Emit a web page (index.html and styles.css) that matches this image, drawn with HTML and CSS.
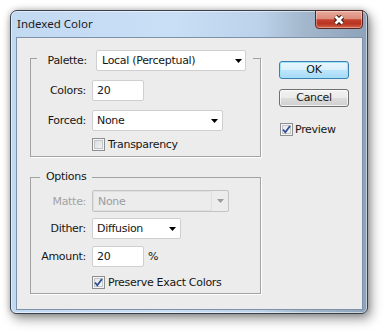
FILE: index.html
```html
<!DOCTYPE html>
<html lang="en">
<head>
  <meta charset="UTF-8" />
  <title>Indexed Color</title>
  <link rel="stylesheet" href="styles.css">
</head>
<body>

  <div class="window">
    <div class="titlebar">
      <div class="title">Indexed Color</div>
      <div class="close">
        <svg width="14" height="12" viewBox="0 0 14 12">
          <path d="M3.5 2.5 L10.5 9.5 M10.5 2.5 L3.5 9.5" stroke="#3a1812" stroke-width="4.6" fill="none"/>
          <path d="M3.5 2.5 L10.5 9.5 M10.5 2.5 L3.5 9.5" stroke="#fff" stroke-width="2.6" fill="none"/>
        </svg>
      </div>
    </div>

    <div class="client">
      <div class="main">

        <fieldset class="group palette">
          <legend>
            <span class="legend-label">Palette:</span>
            <div class="select palette-select">
              <span>Local (Perceptual)</span>
              <svg class="arrow" width="7" height="4" viewBox="0 0 7 4"><path d="M0 0h7L3.5 4z"/></svg>
            </div>
          </legend>

          <div class="row">
            <label>Colors:</label>
            <div class="input">20</div>
          </div>
          <div class="row gap-9">
            <label>Forced:</label>
            <div class="select forced-select">
              <span>None</span>
              <svg class="arrow" width="7" height="4" viewBox="0 0 7 4"><path d="M0 0h7L3.5 4z"/></svg>
            </div>
          </div>
          <div class="row check-row gap-7">
            <span class="check"></span>
            <span>Transparency</span>
          </div>
        </fieldset>

        <fieldset class="group options">
          <legend>Options</legend>

          <div class="row">
            <label class="dim">Matte:</label>
            <div class="select matte-select disabled">
              <span class="field">None</span>
              <svg class="arrow" width="7" height="4" viewBox="0 0 7 4"><path d="M0 0h7L3.5 4z"/></svg>
            </div>
          </div>
          <div class="row gap-6">
            <label>Dither:</label>
            <div class="select dither-select">
              <span>Diffusion</span>
              <svg class="arrow" width="7" height="4" viewBox="0 0 7 4"><path d="M0 0h7L3.5 4z"/></svg>
            </div>
          </div>
          <div class="row gap-7">
            <label>Amount:</label>
            <div class="input">20</div>
            <span class="unit">%</span>
          </div>
          <div class="row check-row gap-9">
            <span class="check checked">
              <svg width="11" height="11" viewBox="0 0 11 11"><path d="M2 5.5 L4.3 8.3 L9 2" stroke="#2f4f95" stroke-width="1.8" fill="none"/></svg>
            </span>
            <span>Preserve Exact Colors</span>
          </div>
        </fieldset>

      </div>

      <div class="side">
        <div class="btn default">OK</div>
        <div class="btn cancel">Cancel</div>
        <div class="preview">
          <span class="check checked">
            <svg width="11" height="11" viewBox="0 0 11 11"><path d="M2 5.5 L4.3 8.3 L9 2" stroke="#2f4f95" stroke-width="1.8" fill="none"/></svg>
          </span>
          <span>Preview</span>
        </div>
      </div>
    </div>
  </div>

</body>
</html>
```

FILE: styles.css
```css
* {
  box-sizing: border-box;
}

html,
body {
  min-height: 334px;
}

body {
  margin: 0;
  padding-top: 10px;
  background: #fff;
  font-family: "DejaVu Sans", sans-serif;
  font-size: 11px;
  letter-spacing: -0.3px;
  color: #161616;
}

/* window frame */
.window {
  margin-left: 10px;
  width: 358px;
  height: 304px;
  border: 1px solid #394049;
  border-radius: 7px 7px 6px 6px;
  padding: 0 4px 3px 5px;
  background: linear-gradient(to right, #c2d9f2 0%, #c9dff6 45%, #bcd2ea 70%, #a3b8cd 82%, #8ea3ba 100%);
  box-shadow: inset 0 0 0 1px rgba(255, 255, 255, 0.5), 0 0 6px rgba(0, 0, 0, 0.25), 3px 5px 12px rgba(0, 0, 0, 0.4);
  display: flex;
  flex-direction: column;
}

.titlebar {
  height: 26px;
  display: flex;
  justify-content: space-between;
  align-items: flex-start;
}

.title {
  font-family: "Noto Sans", sans-serif;
  font-size: 11.5px;
  letter-spacing: 0;
  line-height: 16px;
  padding: 5px 0 0 1px;
  color: #1b1b1b;
}

.close {
  width: 48px;
  height: 19px;
  margin-top: -1px;
  border: 1px solid #5a2720;
  border-radius: 0 0 4px 4px;
  background: linear-gradient(#e8ab9d 0%, #dc8c7c 45%, #c3402c 52%, #b93420 75%, #d2644c 100%);
  box-shadow: inset 0 0 0 1px rgba(255, 255, 255, 0.35);
  display: flex;
  align-items: center;
  justify-content: center;
}

.client {
  flex: 1;
  border: 1px solid #7d91a8;
  background: #ececec;
  display: flex;
  padding: 8px 0 0 13px;
}

.main {
  width: 231px;
}

/* groups */
.group {
  margin: 0;
  width: 231px;
  min-width: 0;
  border: 1px solid #a2a2a2;
  box-shadow: 1px 1px 0 #fff;
}

.palette {
  padding: 9px 0 5px;
}

.palette legend {
  display: flex;
  align-items: center;
  margin-left: 6px;
  padding: 4px 7px 0;
}

.legend-label {
  width: 43px;
  text-align: right;
  margin-right: 9px;
}

.options {
  margin-top: 13px;
  padding: 6px 0 4px;
}

.options legend {
  margin-left: 9px;
  padding: 0 6px;
  line-height: 14px;
}

.row {
  display: flex;
  align-items: center;
}

.row label {
  width: 55px;
  margin-right: 6px;
  text-align: right;
}

.row label.dim {
  color: #a3a3a3;
}

.gap-6 { margin-top: 6px; }
.gap-7 { margin-top: 7px; }
.gap-9 { margin-top: 9px; }

.check-row {
  padding-left: 61px;
  height: 13px;
}

.check-row .check {
  margin-right: 3px;
}

/* fields */
.input,
.select {
  height: 21px;
  background: #fff;
  border: 1px solid #cfcfcf;
  border-radius: 2px;
  display: flex;
  align-items: center;
}

.input {
  width: 52px;
  padding-left: 4px;
}

.unit {
  margin-left: 4px;
}

.select {
  justify-content: space-between;
  padding: 0 4px 0 4px;
}

.palette-select {
  width: 150px;
  padding: 0 3px 0 5px;
}

.forced-select {
  width: 131px;
}

.dither-select {
  width: 89px;
}

.matte-select {
  width: 137px;
  height: 22px;
  padding-left: 0;
}

.select.disabled {
  background: #ececec;
  border-color: #c3c3c3;
  color: #9c9c9c;
}

.select.disabled .field {
  width: 119px;
  height: 100%;
  border: 1px solid #e0e0e0;
  border-radius: 1px;
  padding-left: 4px;
  display: flex;
  align-items: center;
}

.arrow path {
  fill: #000;
}

.disabled .arrow path {
  fill: #9a9a9a;
}

/* checkbox */
.check {
  width: 13px;
  height: 13px;
  border: 1px solid #8e8f8f;
  background: linear-gradient(135deg, #d6d8dc, #f7f7f7);
  box-shadow: inset 0 0 0 1px #f4f4f4, inset 0 0 0 2px #c2c6cc;
  display: inline-flex;
  align-items: center;
  justify-content: center;
  flex-shrink: 0;
}

.check.checked {
  background: linear-gradient(135deg, #e2e4e8, #fbfbfb);
}

/* buttons column */
.side {
  width: 70px;
  margin-left: 18px;
  padding-top: 15px;
}

.btn {
  height: 18px;
  border: 1px solid #707070;
  border-radius: 3px;
  background: linear-gradient(#f2f2f2 0%, #ebebeb 50%, #dddddd 50%, #cfcfcf 100%);
  box-shadow: inset 0 0 0 1px rgba(255, 255, 255, 0.7);
  text-align: center;
  line-height: 16px;
}

.btn.default {
  border-color: #3c7fb1;
  background: linear-gradient(#eaf6fd 0%, #d9f0fc 50%, #bee6fd 50%, #a7d9f5 100%);
  box-shadow: inset 0 0 0 1px #9fe3fa;
}

.btn.cancel {
  margin-top: 10px;
}

.preview {
  margin-top: 16px;
  padding-left: 1px;
  display: flex;
  align-items: center;
  height: 13px;
}

.preview .check {
  margin-right: 2px;
}
```
